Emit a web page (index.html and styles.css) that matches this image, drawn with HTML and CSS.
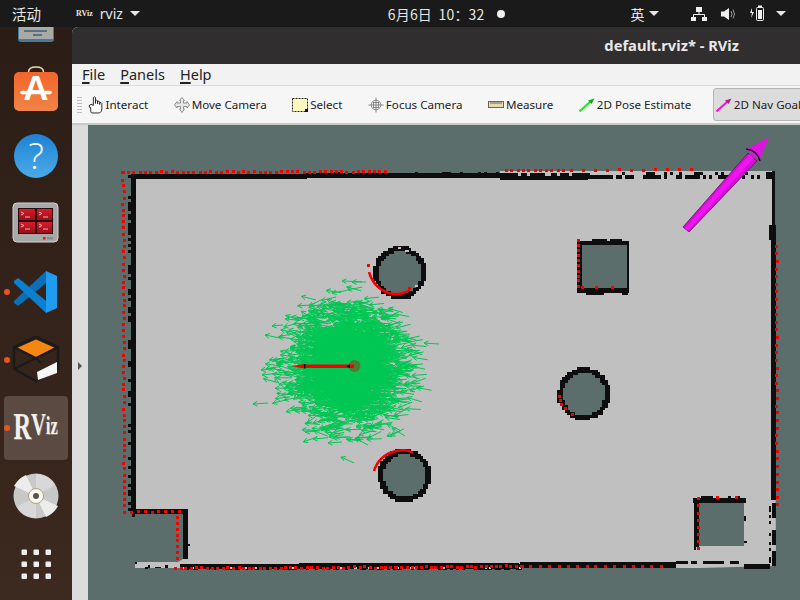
FILE: index.html
```html
<!DOCTYPE html>
<html lang="en">
<head>
  <meta charset="UTF-8">
  <title>default.rviz* - RViz</title>
  <link rel="stylesheet" href="styles.css">
  <script src="map.js" defer></script>
</head>
<body>
  <header class="topbar">
    <span class="activities">活动</span>
    <span class="app-logo">RViz</span>
    <span class="app-name">rviz</span>
    <span class="caret"></span>
    <span class="clock">6月6日&nbsp; 10：32</span>
    <span class="clock-dot"></span>
    <span class="lang">英</span>
    <span class="caret lang-caret"></span>
    <svg class="tray net" width="16" height="16" viewBox="0 0 16 16">
      <rect x="5" y="1" width="6" height="5" fill="#eee"/>
      <rect x="0" y="11" width="5" height="4" fill="#eee"/>
      <rect x="11" y="11" width="5" height="4" fill="#eee"/>
      <path d="M8 6v3M2.500 11V8.500h11V11" stroke="#eee" fill="none"/>
    </svg>
    <svg class="tray vol" width="15" height="16" viewBox="0 0 15 16">
      <path d="M0 5.500h3L8 2v12L3 10.500H0z" fill="#eee"/>
      <path d="M10 5q2 3 0 6M12 3.500q3 4.500 0 9" stroke="#999" fill="none"/>
    </svg>
    <svg class="tray bat" width="16" height="17" viewBox="0 0 16 17">
      <path d="M3 3L1 8h2l-1 5 3-6H3z" fill="#eee"/>
      <rect x="7.500" y="2.500" width="7" height="13" rx="1" fill="none" stroke="#eee"/>
      <rect x="9" y="0.500" width="4" height="2" fill="#eee"/>
      <rect x="9" y="5" width="4" height="9" fill="#eee"/>
    </svg>
    <span class="caret tray-caret"></span>
  </header>

  <div class="desktop">
    <nav class="dock">
      <div class="dock-item">
        <svg width="64" height="64" viewBox="0 0 64 64">
          <rect x="14" y="16" width="36" height="38" rx="3" fill="#3f7d9b"/>
          <rect x="15" y="16" width="34" height="35" fill="#aaa9a4"/>
          <path d="M20 43h23M29 47h9" stroke="#37637e" stroke-width="1.500"/>
        </svg>
      </div>
      <div class="dock-item">
        <svg width="64" height="64" viewBox="0 0 64 64">
          <defs>
            <linearGradient id="bag" x1="0" y1="0" x2="0" y2="1">
              <stop offset="0" stop-color="#f2652b"/>
              <stop offset="1" stop-color="#f08446"/>
            </linearGradient>
          </defs>
          <path d="M24.500 18v-2q0-5 7.500-5t7.500 5v2" fill="none" stroke="#eed3a5" stroke-width="1.500"/>
          <rect x="10" y="16" width="44" height="39" rx="5" fill="url(#bag)"/>
          <text class="bag-a" x="32" y="44" text-anchor="middle">A</text>
          <path d="M18 36.500h28" stroke="#fff" stroke-width="3.500" stroke-linecap="round"/>
        </svg>
      </div>
      <div class="dock-item">
        <svg width="64" height="64" viewBox="0 0 64 64">
          <defs>
            <linearGradient id="help" x1="0" y1="0" x2="0" y2="1">
              <stop offset="0" stop-color="#1d82d4"/>
              <stop offset="1" stop-color="#4cabe8"/>
            </linearGradient>
          </defs>
          <circle cx="32" cy="32" r="22" fill="url(#help)"/>
          <text class="help-q" x="32" y="45" text-anchor="middle">?</text>
        </svg>
      </div>
      <div class="dock-item">
        <svg width="64" height="64" viewBox="0 0 64 64">
          <defs>
            <linearGradient id="pane" x1="0" y1="0" x2="0" y2="1">
              <stop offset="0" stop-color="#d81c2a"/>
              <stop offset="1" stop-color="#96101a"/>
            </linearGradient>
          </defs>
          <rect x="9" y="11" width="45" height="39" rx="4" fill="#a8a8a8" stroke="#d2d2d2"/>
          <rect x="14" y="16" width="35" height="26" fill="#2a0a0c"/>
          <rect x="15" y="17" width="16" height="11" fill="url(#pane)"/>
          <rect x="33" y="17" width="15" height="11" fill="url(#pane)"/>
          <rect x="15" y="30" width="16" height="11" fill="url(#pane)"/>
          <rect x="33" y="30" width="15" height="11" fill="url(#pane)"/>
          <path d="M17 20l3 1.500-3 1.500M21 25h5M35 20l3 1.500-3 1.500M39 25h5M17 32l3 1.500-3 1.500M21 37h5M35 32l3 1.500-3 1.500M39 37h5" stroke="#f2b0b0" fill="none"/>
          <rect x="39" y="45" width="2.500" height="2.500" fill="#f01010"/>
          <rect x="43" y="45" width="6" height="2.500" fill="#8c8c8c"/>
        </svg>
      </div>
      <div class="dock-item">
        <span class="run-dot"></span>
        <svg width="64" height="64" viewBox="0 0 64 64">
          <path d="M42 11V23L18 43l-4 3-4-3v-2z" fill="#0a6fb5"/>
          <path d="M42 53V41L18 21l-4-3-4 3v2z" fill="#0c80d0"/>
          <path d="M42 11L53 16V48L42 53z" fill="#1f9cf0"/>
        </svg>
      </div>
      <div class="dock-item">
        <span class="run-dot"></span>
        <svg width="64" height="64" viewBox="0 0 64 64">
          <path d="M32 9L10 19v22l22 12 22-12V19z" fill="none" stroke="#1d1a1c" stroke-width="2.500" stroke-linejoin="round"/>
          <path d="M13 20L32 11.500 51 20 32 30z" fill="#f5860f"/>
          <path d="M10 41l22-11 22-11M10 19l22 11 5 5" fill="none" stroke="#1d1a1c" stroke-width="2"/>
          <path d="M33 44l20-10v11l-19 7z" fill="#f6f6f6"/>
        </svg>
      </div>
      <div class="dock-item dock-active">
        <span class="run-dot"></span>
        <span class="rviz-logo"><span class="rviz-r">R</span><span class="rviz-v">V</span><span class="rviz-iz">iz</span></span>
      </div>
      <div class="dock-item">
        <svg width="64" height="64" viewBox="0 0 64 64">
          <circle cx="32" cy="32" r="22.500" fill="#c8c8c8"/>
          <path d="M32 32L10 22a24 24 0 0 1 12-11zM32 32L54 42a24 24 0 0 1-12 11z" fill="#ececec"/>
          <path d="M32 32V10a22 22 0 0 1 19 11zM32 32V54a22 22 0 0 1-19-11z" fill="#d8d8d8"/>
          <circle cx="32" cy="32" r="7.500" fill="#fbf8f0" stroke="#b0a080"/>
          <circle cx="32" cy="32" r="3" fill="#55534f"/>
        </svg>
      </div>
      <div class="dock-item">
        <svg width="64" height="64" viewBox="0 0 64 64">
          <g fill="#eee">
            <rect x="17.500" y="17.500" width="5.500" height="5.500" rx="1"/>
            <rect x="29.500" y="17.500" width="5.500" height="5.500" rx="1"/>
            <rect x="41.500" y="17.500" width="5.500" height="5.500" rx="1"/>
            <rect x="17.500" y="29.500" width="5.500" height="5.500" rx="1"/>
            <rect x="29.500" y="29.500" width="5.500" height="5.500" rx="1"/>
            <rect x="41.500" y="29.500" width="5.500" height="5.500" rx="1"/>
            <rect x="17.500" y="41.500" width="5.500" height="5.500" rx="1"/>
            <rect x="29.500" y="41.500" width="5.500" height="5.500" rx="1"/>
            <rect x="41.500" y="41.500" width="5.500" height="5.500" rx="1"/>
          </g>
        </svg>
      </div>
    </nav>

    <main class="window">
      <div class="titlebar">default.rviz* - RViz</div>
      <div class="menubar">
        <span><u>F</u>ile</span>
        <span><u>P</u>anels</span>
        <span><u>H</u>elp</span>
      </div>
      <div class="toolbar">
        <span class="grip"></span>
        <div class="tool">
          <svg width="16" height="18" viewBox="1 1 14 17">
            <path d="M5.500 10V2.500q1-1.500 2 0V8V5.500q1-1 2 0V8.500V6.500q1-1 2 0V9V7.500q1.500-.8 2 .500V13q0 3-2 4H4q-1-.5-1-2v-3q-1.500 0-1.500-1.500T4 9z" fill="#fff" stroke="#222" stroke-width=".9"/>
          </svg>
          Interact
        </div>
        <div class="tool">
          <svg width="16" height="16" viewBox="0 0 16 16">
            <path d="M8 .5l2.500 3H9.500V6H13V4.500l2.500 3.500L13 11V9.500H9.500V12h1L8 15.500 5.500 12h1V9.500H3V11L.5 8 3 4.500V6h3.500V3.500h-1z" fill="#e8e8e8" stroke="#777" stroke-width=".8"/>
          </svg>
          Move Camera
        </div>
        <div class="tool">
          <svg width="16" height="14" viewBox="0 0 16 14">
            <rect x=".5" y=".5" width="15" height="13" fill="#fdf8bb" stroke="#222" stroke-dasharray="2 1"/>
            <rect x="13" y="11" width="3" height="3" fill="#111"/>
          </svg>
          Select
        </div>
        <div class="tool">
          <svg width="16" height="16" viewBox="0 0 16 16">
            <circle cx="8" cy="8" r="4.800" fill="#eee" stroke="#888"/>
            <path d="M8 .5v15M.5 8h15M5 5.500h6M5 10.500h6M5.500 5v6M10.500 5v6" stroke="#888" fill="none"/>
          </svg>
          Focus Camera
        </div>
        <div class="tool">
          <svg width="16" height="7" viewBox="0 0 16 7">
            <rect x=".5" y=".5" width="15" height="6" fill="#e5d9ad" stroke="#666"/>
            <path d="M3 1v2M5 1v2M7 1v2M9 1v2M11 1v2M13 1v2" stroke="#666"/>
          </svg>
          Measure
        </div>
        <div class="tool">
          <svg width="16" height="14" viewBox="0 0 16 14">
            <path d="M.5 13.500L11 4" stroke="#12ee12" stroke-width="2"/>
            <path d="M15.500 .5L9 2.500l3.500 3.500z" fill="#12aa12"/>
          </svg>
          2D Pose Estimate
        </div>
        <div class="tool tool-on">
          <svg width="16" height="14" viewBox="0 0 16 14">
            <path d="M.5 13.500L11 4" stroke="#f414d0" stroke-width="2"/>
            <path d="M15.500 .5L9 2.500l3.500 3.500z" fill="#b01898"/>
          </svg>
          2D Nav Goal
        </div>
      </div>
      <div class="viewport">
        <div class="side-handle"><span class="side-arrow"></span></div>
        <svg id="map" class="map" width="712" height="475" viewBox="88 125 712 475"></svg>
      </div>
    </main>
  </div>
</body>
</html>
```

FILE: styles.css
```css
html, body {
  margin: 0;
  width: 800px;
  height: 600px;
  overflow: hidden;
  background: #1a1a1a;
  font-family: "Noto Sans", "Noto Sans CJK SC", sans-serif;
}

.topbar {
  display: flex;
  align-items: center;
  height: 27px;
  background: #1a1a1a;
  color: #e6e6e6;
  font-size: 14px;
  white-space: nowrap;
}
.activities {
  margin-left: 12px;
  font-family: "Noto Sans CJK SC", sans-serif;
  font-size: 14.500px;
}
.app-logo {
  margin-left: 35px;
  font-family: "Liberation Serif", serif;
  font-size: 8px;
  font-weight: bold;
}
.app-name { margin-left: 7px; }
.caret {
  width: 0;
  height: 0;
  margin-left: 7px;
  border-left: 5px solid transparent;
  border-right: 5px solid transparent;
  border-top: 5px solid #e6e6e6;
}
.clock {
  margin-left: 248px;
  font-family: "Noto Sans CJK SC", sans-serif;
  font-size: 14px;
  letter-spacing: .15px;
}
.clock-dot {
  width: 8px;
  height: 8px;
  margin-left: 13px;
  border-radius: 50%;
  background: #eee;
}
.lang {
  margin-left: 125px;
  font-family: "Noto Sans CJK SC", sans-serif;
}
.lang-caret { margin-left: 5px; }
.net { margin-left: 32px; }
.vol { margin-left: 14px; }
.bat { margin-left: 13px; }
.tray-caret { margin-left: 11px; }

.desktop {
  display: flex;
  height: 573px;
}

.dock {
  flex: none;
  display: flex;
  flex-direction: column;
  gap: 4px;
  width: 72px;
  padding: 0 4px;
  box-sizing: border-box;
  overflow: hidden;
  background: linear-gradient(#2b1d16, #3c291f);
}
.dock-item {
  flex: none;
  position: relative;
  width: 64px;
  height: 64px;
}
.dock-item:first-child { margin-top: -39px; }
.dock-item svg { display: block; }
.dock-active {
  display: flex;
  align-items: center;
  justify-content: center;
  border-radius: 4px;
  background: #5b4a41;
}
.run-dot {
  position: absolute;
  left: 0;
  top: 29px;
  width: 6px;
  height: 6px;
  border-radius: 50%;
  background: #e9541f;
}
.bag-a {
  font-family: "Liberation Sans", sans-serif;
  font-size: 35px;
  font-weight: bold;
  fill: #fff;
}
.help-q {
  font-family: "Open Sans", sans-serif;
  font-size: 37px;
  font-weight: 300;
  fill: #fff;
}
.rviz-logo {
  display: flex;
  align-items: center;
  margin-top: -3px;
  font-family: "Liberation Serif", serif;
  font-weight: bold;
  color: #f2f0ee;
  text-shadow: 1px 1px 0 #8a8078;
  transform: scaleX(.66);
}
.rviz-r { font-size: 37px; }
.rviz-v { font-size: 31px; margin-top: -4px; }
.rviz-iz { font-size: 25px; margin-top: -2px; }

.window {
  flex: 1;
  min-width: 0;
  display: flex;
  flex-direction: column;
  overflow: hidden;
  border-top-left-radius: 6px;
  background: #f2f2f2;
}
.titlebar {
  height: 37px;
  line-height: 37px;
  padding-right: 61px;
  text-align: right;
  background: #302e2e;
  color: #e8e8e8;
  font-size: 14.700px;
  font-weight: bold;
}
.menubar {
  display: flex;
  gap: 15px;
  height: 21px;
  padding-left: 10px;
  line-height: 21px;
  background: #f2f2f2;
  color: #222;
  font-size: 14.500px;
}
.menubar u {
  text-decoration-thickness: 2px;
  text-underline-offset: 2px;
}
.toolbar {
  display: flex;
  align-items: center;
  gap: 25.500px;
  height: 40px;
  padding: 0 0 0 5px;
  border-top: 1px solid #dcdcdc;
  border-bottom: 2px solid #c9c9c9;
  box-sizing: border-box;
  background: #f6f6f6;
  color: #222;
  font-size: 11.600px;
  white-space: nowrap;
}
.grip {
  flex: none;
  width: 5px;
  height: 17px;
  margin-right: -20px;
  background: radial-gradient(#bbb 40%, transparent 45%) 0 0 / 2px 3px;
}
.tool {
  display: flex;
  align-items: center;
  gap: 2px;
  flex: none;
}
.tool-on {
  height: 31px;
  margin-left: -4px;
  padding: 0 3px 0 2px;
  border: 1px solid #b5b5b5;
  border-radius: 3px;
  background: #dcdcdc;
}

.viewport {
  flex: 1;
  display: flex;
  min-height: 0;
}
.side-handle {
  flex: none;
  display: flex;
  align-items: center;
  justify-content: center;
  width: 16px;
  padding-top: 7px;
  box-sizing: border-box;
  background: #dcdcdc;
}
.side-arrow {
  width: 0;
  height: 0;
  border-top: 4px solid transparent;
  border-bottom: 4px solid transparent;
  border-left: 4px solid #555;
}
.map {
  display: block;
  flex: none;
  background: #5b6e6c;
}
.free { fill: #c0c0c0; }
.hole { fill: #5b6e6c; }
.wall { fill: #0e0e0e; shape-rendering: crispEdges; }
.speck { fill: #c0c0c0; shape-rendering: crispEdges; }
.cloud {
  fill: none;
  stroke: #00c853;
  stroke-width: 1;
}
.laser { fill: #f70000; shape-rendering: crispEdges; }
.laser-arc {
  fill: none;
  stroke: #f70000;
  stroke-width: 2.500;
}
```

FILE: map.js
```js
// draws the occupancy grid, particle cloud and laser scan
const svg = document.getElementById('map');
const NS = 'http://www.w3.org/2000/svg';

let seed = 12345;
function rnd() {
  seed = (seed * 1664525 + 1013904223) % 4294967296;
  return seed / 4294967296;
}
function gauss() {
  return Math.sqrt(-2 * Math.log(rnd() + 1e-9)) * Math.cos(2 * Math.PI * rnd());
}

function add(tag, cls, attrs) {
  const el = document.createElementNS(NS, tag);
  el.setAttribute('class', cls);
  for (const k in attrs) el.setAttribute(k, attrs[k]);
  svg.appendChild(el);
  return el;
}

let wallD = '';
let speckD = '';
function rect(x, y, w, h) {
  wallD += `M${x} ${y}h${w}v${h}h${-w}z`;
}
function speck(x, y, w, h) {
  speckD += `M${x} ${y}h${w}v${h}h${-w}z`;
}

// broken wall: cells along a horizontal run
function brokenH(x0, x1, y, h, fill) {
  for (let x = x0; x < x1; x += 3) {
    if (rnd() < fill) rect(x, y, 3, h);
  }
}
function brokenV(y0, y1, x, w, fill) {
  for (let y = y0; y < y1; y += 3) {
    if (rnd() < fill) rect(x, y, w, 3);
  }
}

// ring of grid cells around a round obstacle
function ring(cx, cy, r) {
  const c = 2.5;
  add('circle', 'hole', { cx: cx, cy: cy, r: r - 3 });
  for (let x = cx - r - 3; x < cx + r + 3; x += c) {
    for (let y = cy - r - 3; y < cy + r + 3; y += c) {
      const d = Math.hypot(x + c / 2 - cx, y + c / 2 - cy);
      if (d > r - 5 + rnd() * 0.8 && d < r - 0.5 + rnd() * 1.2) {
        rect(Math.round(x), Math.round(y), 3, 3);
      }
    }
  }
}

// free space
add('path', 'free', {
  d: 'M131 174H500V171H774L776 566L700 568H180L178 568H135V562H178L183 559H188V514H136V509H131Z'
});

// square obstacles
add('rect', 'hole', { x: 582, y: 245, width: 45, height: 43 });
add('rect', 'hole', { x: 699, y: 503, width: 45, height: 43 });

ring(399.5, 272, 26);
ring(583.5, 393.5, 26);
ring(404, 475, 26);

// outer walls
rect(131, 174, 176, 5);
rect(304, 173, 196, 5);
brokenH(304, 500, 172, 2, 0.15);
rect(500, 176, 88, 4);
brokenH(500, 588, 173, 3, 0.75);
rect(588, 175, 22, 4);
brokenH(610, 770, 172, 3, 0.3);
brokenH(610, 770, 175, 4, 0.6);
rect(772, 171, 3, 60);
rect(771, 225, 5, 275);
brokenV(225, 240, 769, 2, 0.4);
brokenV(500, 565, 772, 4, 0.6);
brokenV(500, 565, 769, 2, 0.4);

rect(131, 175, 5, 335);
brokenV(175, 510, 128, 3, 0.4);

rect(130, 509, 58, 5);
rect(183, 509, 5, 50);
rect(188, 544, 2, 2);
rect(132, 514, 3, 3);

rect(180, 564, 340, 5);
brokenH(180, 520, 568, 2, 0.6);
rect(299, 563, 220, 2);
rect(520, 562, 156, 6);
brokenH(670, 745, 561, 3, 0.5);
rect(744, 564, 26, 5);
rect(135, 562, 2, 2);
rect(148, 565, 2, 3);
rect(145, 567, 3, 2);
rect(155, 567, 6, 1);
rect(165, 565, 3, 3);

// square obstacle walls
rect(577, 241, 5, 52);
rect(582, 241, 47, 4);
rect(627, 241, 2, 52);
rect(582, 288, 47, 5);
brokenH(580, 626, 239, 2, 0.4);
brokenH(586, 626, 293, 2, 0.5);
rect(693, 498, 53, 5);
rect(694, 503, 5, 44);
rect(694, 547, 2, 3);
brokenH(698, 740, 496, 2, 0.4);
rect(744, 516, 2, 5);
rect(744, 541, 3, 2);

// light specks that break up the noisy walls
for (let i = 0; i < 26; i++) {
  speck(180 + Math.floor(rnd() * 340), 567, 2, 2);
}
speck(398, 247, 3, 2);
speck(405, 250, 4, 2);
speck(415, 285, 3, 2);

add('path', 'wall', { d: wallD });
add('path', 'speck', { d: speckD });

// particle cloud, all arrows about 15px long and heading left
function arrow(x, y, tx, ty) {
  const a = Math.atan2(ty - y, tx - x);
  const h = 5;
  const ax = tx - h * Math.cos(a - 0.5), ay = ty - h * Math.sin(a - 0.5);
  const bx = tx - h * Math.cos(a + 0.5), by = ty - h * Math.sin(a + 0.5);
  return `M${x.toFixed(1)} ${y.toFixed(1)}L${tx.toFixed(1)} ${ty.toFixed(1)}` +
    `M${ax.toFixed(1)} ${ay.toFixed(1)}L${tx.toFixed(1)} ${ty.toFixed(1)}L${bx.toFixed(1)} ${by.toFixed(1)}`;
}

let cloudD = '';
for (let i = 0; i < 2500; i++) {
  const x = 357 + gauss() * 26;
  const y = 366 + gauss() * 27;
  if (Math.hypot(x - 357, y - 366) > 82) continue;
  const a = Math.PI + gauss() * 0.22;
  cloudD += arrow(x, y, x + 15 * Math.cos(a), y + 15 * Math.sin(a));
}
const strays = [
  [366, 282, 342, 281], [362, 282, 352, 282], [323, 299, 309, 306], [439, 344, 424, 343],
  [280, 338, 265, 335], [268, 403, 253, 404], [354, 463, 341, 457], [405, 436, 392, 428],
  [368, 445, 355, 438], [342, 442, 328, 443], [423, 364, 408, 365], [424, 386, 410, 391],
  [420, 353, 407, 348], [283, 325, 272, 326], [288, 372, 262, 375], [280, 385, 275, 377]
];
for (const s of strays) cloudD += arrow(s[0], s[1], s[2], s[3]);
add('path', 'cloud', { d: cloudD });

// robot and pose arrow
add('circle', 'robot', { cx: 354.5, cy: 366, r: 6, fill: '#4f7a33' });
add('path', 'pose-head', { d: 'M292 366.300L304 364V368.500Z', fill: '#f40000' });
add('rect', 'pose-line', { x: 304, y: 364.500, width: 50, height: 3.500, fill: '#f40000' });
add('rect', 'pose-tick', { x: 304, y: 364, width: 1.5, height: 4.5, fill: '#111' });
add('path', 'pose-nose', { d: 'M346 366.300L350 364.500V368.200Z', fill: '#111' });

// laser scan
let laserD = '';
function dot(x, y) {
  laserD += `M${Math.round(x)} ${Math.round(y)}h3v3h-3z`;
}
function run(x0, y0, x1, y1, step, jitter) {
  const n = Math.round(Math.hypot(x1 - x0, y1 - y0) / step);
  for (let i = 0; i <= n; i++) {
    const t = i / n;
    dot(x0 + (x1 - x0) * t + (rnd() - 0.5) * jitter,
        y0 + (y1 - y0) * t + (rnd() - 0.5) * jitter);
  }
}

run(122, 171, 384, 170, 5.5, 1.2);
run(505, 169, 562, 169, 6, 1);
run(570, 169, 690, 168, 12, 1);
run(122, 172, 123, 510, 6, 1.6);
run(130, 511, 178, 510, 7.2, 1);
run(176, 516, 176, 557, 5.6, 0.8);
run(174, 567, 395, 566, 5.3, 1.5);
run(395, 566, 520, 565, 5, 1.5);
run(520, 565, 660, 565, 9.5, 1);
run(775, 245, 776, 503, 7.5, 1);
run(577, 239, 577, 285, 5, 1);
dot(581, 286); dot(595, 286); dot(611, 286);
run(697, 497, 697, 547, 7, 0.8);
dot(716, 496); dot(735, 496);

[[117, 108], [120, 120], [125, 132], [137, 146], [158, 162]].forEach(p => {
  dot(520 + p[0] / 3 - 1.5, 360 + p[1] / 3 - 1.5);
});
dot(367, 264);
add('path', 'laser-arc', { d: 'M369 272Q373 287 388 293Q400 296 410 290' });
dot(408, 287);
add('path', 'laser-arc', { d: 'M374 471Q379 455 396 451Q408 449 413 453' });
add('path', 'laser', { d: laserD });

// 2D nav goal arrow
const goal = add('g', 'goal', {});
goal.innerHTML =
  '<path d="M683 227L748 153L757 161L689 232Z" fill="#d40fd4" stroke="#4a1050" stroke-width=".7"/>' +
  '<path d="M685 228L750 154L754 158L688 231Z" fill="#f014f0"/>' +
  '<path d="M769 137L747 149L759 161Z" fill="#e012e0"/>' +
  '<path d="M746 149Q757 150 760 161" fill="none" stroke="#200820" stroke-width="1.500"/>';
```
